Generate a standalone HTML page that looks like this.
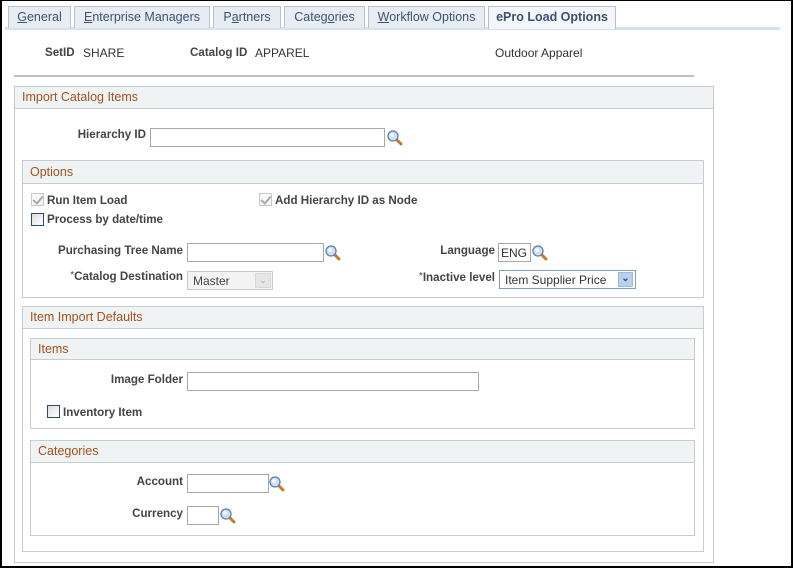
<!DOCTYPE html>
<html><head><meta charset="utf-8"><style>
*{box-sizing:border-box;margin:0;padding:0}
body{width:793px;height:568px;background:#fff;position:relative;overflow:hidden;font-family:"Liberation Sans",Arial,sans-serif;font-size:12px;color:#333}
.a{position:absolute}
.frame{left:0;top:0;width:793px;height:568px;border:2px solid #000;border-top:1px solid #000;border-right:2px solid #000}
.tab{position:absolute;top:6px;height:22px;background:#e8edf4;border:1px solid #b9c3d0;border-bottom:none;color:#3c5270;font-size:12.5px;text-align:center;line-height:21px}
.tab u{text-decoration:underline}
.act{background:#f3f6fa;font-weight:bold;height:23px}
.tabline{left:5px;top:27px;height:3px;background:#d6e1ee;width:775px}
.lbl{position:absolute;font-weight:bold;color:#444;text-align:right;white-space:nowrap;font-size:11.6px}
.lbl i{font-style:normal;font-weight:normal;font-size:10px;vertical-align:top}
.val{position:absolute;color:#333;white-space:nowrap}
.box{position:absolute;border:1px solid #c6ccd2}
.hd{position:absolute;left:0;top:0;right:0;background:#eff3f4;border-bottom:1px solid #c6ccd2;color:#a5511b;font-size:12.5px;padding-left:7px}
.in{position:absolute;border:1px solid #a8a8a8;background:#fff;height:19px}
.ic{position:absolute;width:16px;height:16px}
.cb{position:absolute;width:13px;height:13px;border:1px solid #1f4e7e;background:linear-gradient(135deg,#ddd,#fff)}
.cbd{border:1px solid #c8c8c8;background:#f7f7f7}
.cbd:after{content:"";position:absolute;left:3px;top:0px;width:4px;height:8px;border:solid #a8a8a8;border-width:0 2px 2px 0;transform:rotate(40deg)}
</style></head><body>
<div class="a frame"></div>
<div class="a tabline"></div>
<div class="tab" style="left:8px;width:63px"><u>G</u>eneral</div>
<div class="tab" style="left:74px;width:136px"><u>E</u>nterprise Managers</div>
<div class="tab" style="left:213px;width:68px">P<u>a</u>rtners</div>
<div class="tab" style="left:284px;width:81px">Categ<u>o</u>ries</div>
<div class="tab" style="left:368px;width:117px"><u>W</u>orkflow Options</div>
<div class="tab act" style="left:488px;width:128px">ePro Load Options</div>

<div class="lbl" style="left:45px;top:46px">SetID</div><div class="val" style="left:83px;top:46px">SHARE</div>
<div class="lbl" style="left:190px;top:46px">Catalog ID</div><div class="val" style="left:255px;top:46px">APPAREL</div>
<div class="val" style="left:495px;top:46px">Outdoor Apparel</div>
<div class="a" style="left:14px;top:75px;width:680px;height:2px;background:#c0c0c0"></div>

<div class="box" style="left:14px;top:86px;width:700px;height:477px"><div class="hd" style="height:22px;line-height:21px">Import Catalog Items</div></div>
<div class="lbl" style="right:647px;top:128px">Hierarchy ID</div>
<div class="in" style="left:150px;top:128px;width:235px"></div>

<div class="box" style="left:22px;top:160px;width:682px;height:138px"><div class="hd" style="height:23px;line-height:22px">Options</div></div>
<div class="cb cbd" style="left:31px;top:193px"></div><div class="lbl" style="left:47px;top:194px">Run Item Load</div>
<div class="cb cbd" style="left:259px;top:193px"></div><div class="lbl" style="left:275px;top:194px">Add Hierarchy ID as Node</div>
<div class="cb" style="left:31px;top:213px"></div><div class="lbl" style="left:47px;top:213px">Process by date/time</div>
<div class="lbl" style="right:610px;top:244px">Purchasing Tree Name</div>
<div class="in" style="left:187px;top:243px;width:137px"></div>
<div class="lbl" style="right:610px;top:270px"><i>*</i>Catalog Destination</div>
<div class="in" style="left:187px;top:271px;width:86px;background:#f4f4f4;border-color:#c8c8c8;color:#444;padding-left:5px;line-height:18px">Master<span style="position:absolute;right:1px;top:1px;width:16px;height:15px;background:#e6e6e6;border:1px solid #d8d8d8;color:#aaa;font-size:9px;text-align:center;line-height:13px">&#8964;</span></div>
<div class="lbl" style="right:298px;top:244px">Language</div>
<div class="in" style="left:498px;top:243px;width:33px;padding-left:2px;line-height:18px">ENG</div>
<div class="lbl" style="right:298px;top:271px"><i>*</i>Inactive level</div>
<div class="in" style="left:499px;top:270px;width:137px;border-color:#7f9db9;padding-left:5px;line-height:18px">Item Supplier Price<span style="position:absolute;right:2px;top:1px;width:15px;height:15px;background:#b9d1ef;border:1px solid #9fb8d8;color:#30507a;font-size:10px;font-weight:bold;text-align:center;line-height:11px">&#8964;</span></div>

<div class="box" style="left:22px;top:306px;width:682px;height:246px"><div class="hd" style="height:22px;line-height:21px">Item Import Defaults</div></div>
<div class="box" style="left:30px;top:338px;width:665px;height:91px"><div class="hd" style="height:21px;line-height:20px">Items</div></div>
<div class="lbl" style="right:610px;top:373px">Image Folder</div>
<div class="in" style="left:187px;top:372px;width:292px"></div>
<div class="cb" style="left:47px;top:405px;border-color:#2b4a6a"></div><div class="lbl" style="left:63px;top:406px">Inventory Item</div>

<div class="box" style="left:30px;top:440px;width:665px;height:96px"><div class="hd" style="height:22px;line-height:21px">Categories</div></div>
<div class="lbl" style="right:610px;top:475px">Account</div>
<div class="in" style="left:187px;top:474px;width:82px"></div>
<div class="lbl" style="right:610px;top:507px">Currency</div>
<div class="in" style="left:187px;top:506px;width:32px"></div>

<svg width="0" height="0" style="position:absolute"><defs><g id="mg"><line x1="9" y1="9" x2="14" y2="14" stroke="#c9772f" stroke-width="3" stroke-linecap="round"/><circle cx="6" cy="6" r="5" fill="#cfe0f4" stroke="#5b7fae" stroke-width="1.3"/><circle cx="5" cy="5" r="2" fill="#fff" opacity=".8"/></g></defs></svg>
<svg class="ic" style="left:387px;top:130px" viewBox="0 0 16 16"><use href="#mg"/></svg>
<svg class="ic" style="left:325px;top:245px" viewBox="0 0 16 16"><use href="#mg"/></svg>
<svg class="ic" style="left:532px;top:245px" viewBox="0 0 16 16"><use href="#mg"/></svg>
<svg class="ic" style="left:269px;top:476px" viewBox="0 0 16 16"><use href="#mg"/></svg>
<svg class="ic" style="left:220px;top:508px" viewBox="0 0 16 16"><use href="#mg"/></svg>
</body></html>
